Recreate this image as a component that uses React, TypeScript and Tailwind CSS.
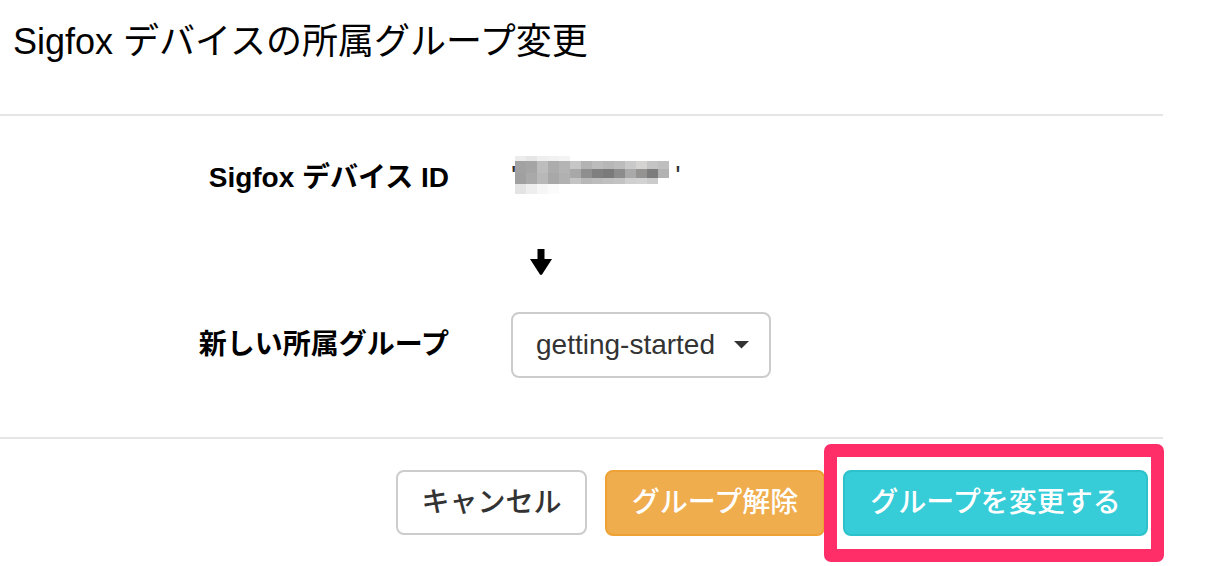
import React from "react";

const FONT = { fontFamily: '"Liberation Sans", Arial, "Noto Sans CJK JP", sans-serif' };

const blurTop = ["bg-[#ececec]", "bg-[#e6e6e6]", "bg-[#eeeeee]", "bg-[#f1f1f1]", "bg-[#f4f4f4]"];
const blurLeftA = ["bg-[#a2a2a2]", "bg-[#a5a5a5]", "bg-[#bdbdbd]", "bg-[#acacac]", "bg-[#b4b4b4]"];
const blurLeftB = ["bg-[#a0a0a0]", "bg-[#a9a9a9]", "bg-[#b8b8b8]", "bg-[#a8a8a8]", "bg-[#b1b1b1]"];
const blurLeftC = ["bg-[#e4e4e4]", "bg-[#eeeeee]", "bg-[#f6f6f6]", "bg-[#fbfbfb]", "bg-[#ffffff]"];
const blurRightA = ["bg-[#c6c6c6]", "bg-[#b3b3b3]", "bg-[#bcbcbc]", "bg-[#b7b7b7]", "bg-[#bcbcbc]", "bg-[#c9c9c9]", "bg-[#d5d3d0]", "bg-[#c4c4c4]", "bg-[#bfbfbf]"];
const blurRightB = ["bg-[#a8a8a8]", "bg-[#8f8f8f]", "bg-[#7f7f7f]", "bg-[#7a7a7a]", "bg-[#8c8c8c]", "bg-[#a9a9a9]", "bg-[#959391]", "bg-[#7c7c7c]", "bg-[#b2b2b2]"];
const blurRightC = ["bg-[#c4c4c4]", "bg-[#b8b8b8]", "bg-[#bcbcbc]", "bg-[#c0c0c0]", "bg-[#c3c3c3]", "bg-[#cfcfcf]", "bg-[#d2d2d2]", "bg-[#cbcbcb]", "bg-[#ffffff]"];

function Cells({ list, h }: { list: string[]; h: string }) {
  return (
    <div className="flex">
      {list.map((c, i) => (
        <div key={i} className={`w-[11px] ${h} ${c}`} />
      ))}
    </div>
  );
}

function BlurredId() {
  return (
    <div className="flex items-start">
      <div className="flex flex-col">
        <Cells list={blurTop} h="h-[5px]" />
        <Cells list={blurLeftA} h="h-[12px]" />
        <Cells list={blurLeftB} h="h-[11px]" />
        <Cells list={blurLeftC} h="h-[10px]" />
      </div>
      <div className="flex flex-col pt-[5px]">
        <Cells list={blurRightA} h="h-[8px]" />
        <Cells list={blurRightB} h="h-[9px]" />
        <Cells list={blurRightC} h="h-[6px]" />
      </div>
    </div>
  );
}

function ArrowDown() {
  return (
    <svg width="22" height="26" viewBox="0 0 22 26" className="block">
      <rect x="7.5" y="0" width="7" height="11" fill="#000" />
      <path d="M0 10 L22 10 L12.2 25.2 Q11 26.6 9.8 25.2 Z" fill="#000" />
    </svg>
  );
}

export default function App() {
  return (
    <div className="w-[1206px] h-[566px] bg-white overflow-hidden" style={FONT}>
      <div className="w-[1163px]">
        {/* Header */}
        <div className="h-[116px] border-b-2 border-[#e5e5e5] pl-[13px] pt-[22px]">
          <h4 className="text-[36px] leading-[40px] text-black font-normal">
            Sigfox デバイスの所属グループ変更
          </h4>
        </div>

        {/* Body */}
        <div className="pt-[29px] pb-[59px]">
          <div className="h-[66px] flex items-center">
            <div className="w-[449px] text-right text-[28px] font-bold text-black">Sigfox デバイス ID</div>
            <div className="ml-[62px] flex items-start text-[28px] text-[#333] leading-none">
              <span>'</span>
              <div className="ml-[-1px] mt-[-6px]">
                <BlurredId />
              </div>
              <span className="ml-[6px]">'</span>
            </div>
          </div>
          <div className="h-[101px] flex items-center">
            <div className="ml-[530px]">
              <ArrowDown />
            </div>
          </div>
          <div className="h-[66px] flex items-center">
            <div className="w-[449px] text-right text-[28px] font-bold text-black">新しい所属グループ</div>
            <div className="ml-[62px] w-[260px] h-[66px] border-2 border-[#cccccc] rounded-[8px] flex items-center pl-[23px] text-[28px] text-[#333]">
              <span>getting-started</span>
              <svg width="15" height="8" viewBox="0 0 15 8" className="ml-[19px]">
                <path d="M0 0 L15 0 L7.5 7.5 Z" fill="#333" />
              </svg>
            </div>
          </div>
        </div>

        {/* Footer */}
        <div className="border-t-2 border-[#e5e5e5] pt-[31px] pr-[15px] flex justify-end items-start">
          <button className="w-[191px] h-[65px] border-2 border-[#cccccc] rounded-[8px] bg-white text-[28px] font-medium text-[#333] flex items-center justify-center">
            キャンセル
          </button>
          <button className="ml-[18px] w-[220px] h-[66px] border-2 border-[#eea236] rounded-[8px] bg-[#f0ad4e] text-[28px] font-medium text-white flex items-center justify-center">
            グループ解除
          </button>
          <div className="relative ml-[18px]">
            <button className="w-[305px] h-[66px] border-2 border-[#2cc1cb] rounded-[8px] bg-[#36cdd8] text-[28px] font-medium text-white flex items-center justify-center">
              グループを変更する
            </button>
            <span className="absolute -left-[19px] -top-[26px] -right-[16px] -bottom-[26px] border-[13px] border-[#ff2e69] rounded-[7px] pointer-events-none" />
          </div>
        </div>
      </div>
    </div>
  );
}
